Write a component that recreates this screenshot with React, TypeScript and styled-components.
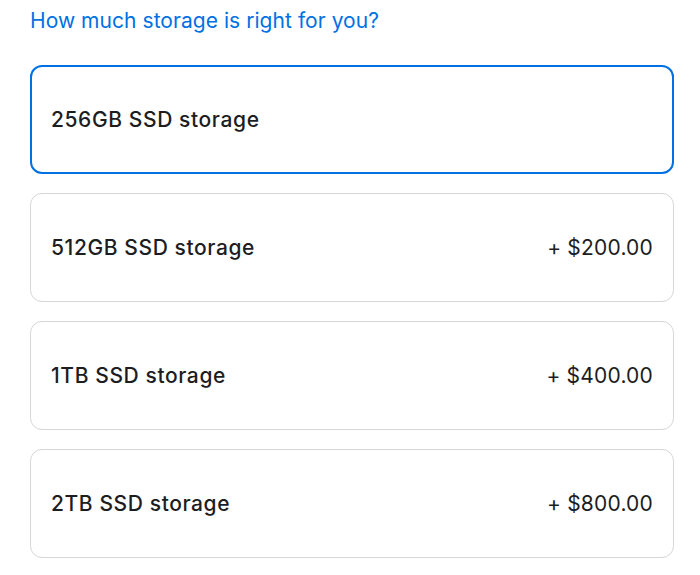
import React from "react";
import styled, { createGlobalStyle } from "styled-components";

const Global = createGlobalStyle`
  html, body { margin: 0; padding: 0; background: #ffffff; }
  body { font-family: Inter, "Noto Sans", sans-serif; -webkit-font-smoothing: antialiased; }
`;

const Page = styled.div`
  padding: 6px 26px 0 30px;
  display: flex;
  flex-direction: column;
`;

const Heading = styled.h2`
  margin: 0 0 29px 0;
  font-size: 21px;
  line-height: 30px;
  font-weight: 400;
  color: #0071e3;
  letter-spacing: 0.05px;
`;

const List = styled.div`
  display: flex;
  flex-direction: column;
  gap: 19px;
`;

const Card = styled.div<{ $selected?: boolean }>`
  box-sizing: border-box;
  height: 109px;
  border-radius: 12px;
  border: ${(p) => (p.$selected ? "2px solid #0071e3" : "1px solid #d6d6db")};
  padding: 0 ${(p) => (p.$selected ? 19 : 20)}px 0 ${(p) => (p.$selected ? 19 : 20)}px;
  display: flex;
  align-items: center;
  justify-content: space-between;
  color: #1d1d1f;
`;

const Label = styled.span`
  font-size: 21px;
  font-weight: 500;
  letter-spacing: 0.6px;
`;

const Price = styled.span`
  font-size: 21px;
  font-weight: 400;
  letter-spacing: 0.2px;
`;

const options = [
  { label: "256GB SSD storage", price: "", selected: true },
  { label: "512GB SSD storage", price: "+ $200.00" },
  { label: "1TB SSD storage", price: "+ $400.00" },
  { label: "2TB SSD storage", price: "+ $800.00" },
];

export default function App() {
  return (
    <>
      <Global />
      <Page>
        <Heading>How much storage is right for you?</Heading>
        <List>
          {options.map((o) => (
            <Card key={o.label} $selected={o.selected}>
              <Label>{o.label}</Label>
              {o.price && <Price>{o.price}</Price>}
            </Card>
          ))}
        </List>
      </Page>
    </>
  );
}
